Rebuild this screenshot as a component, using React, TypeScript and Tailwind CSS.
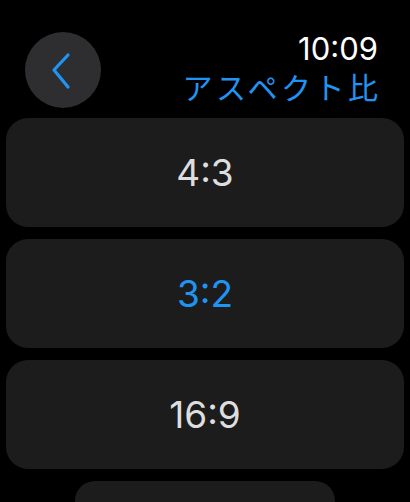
import React from "react";

function App() {
    const ratios = [
        { label: "4:3", active: false },
        { label: "3:2", active: true },
        { label: "16:9", active: false },
    ];

    return (
        <div className="w-[410px] h-[502px] bg-black overflow-hidden font-['Inter','Noto_Sans_CJK_JP',sans-serif]">
            <div className="flex justify-between pl-[25px] pr-[32px] pt-[32px]">
                <div className="w-[76px] h-[76px] rounded-full bg-[#2e2e30] flex items-center justify-center">
                    <svg width="76" height="76" viewBox="0 0 76 76" fill="none">
                        <path d="M43 23 L29 38 L43 55" stroke="#2094f3" strokeWidth="3.2" strokeLinecap="round" strokeLinejoin="round" />
                    </svg>
                </div>
                <div className="flex flex-col items-end">
                    <p className="text-[31px] leading-[34px] text-white">10:09</p>
                    <p className="text-[30px] leading-[36px] mt-[2px] tracking-[3.5px] mr-[-3.5px] text-[#2094f3] font-['Noto_Sans_CJK_JP',sans-serif]">アスペクト比</p>
                </div>
            </div>

            <div className="flex flex-col items-center gap-[12px] mt-[10px] px-[6px]">
                {ratios.map((r, index) => (
                    <div key={index} className="w-full h-[109px] rounded-[22px] bg-[#1c1c1c] flex items-center justify-center">
                        <p className={`text-[37px] ${r.active ? "text-[#2094f3]" : "text-[#dedede]"}`}>{r.label}</p>
                    </div>
                ))}
                <div className="w-[260px] h-[60px] shrink-0 rounded-[20px] bg-[#1c1c1c]"></div>
            </div>
        </div>
    );
}

export default App;
